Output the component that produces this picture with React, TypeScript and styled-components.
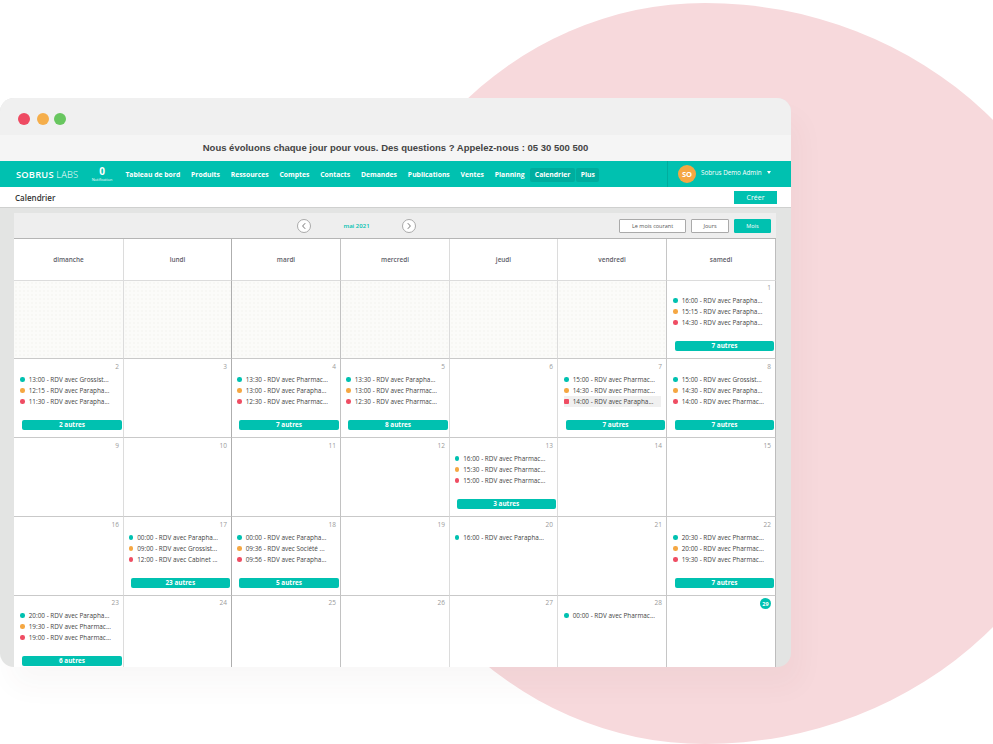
import React from "react";
import styled, { createGlobalStyle } from "styled-components";

const Global = createGlobalStyle`
  html, body { margin: 0; padding: 0; background: #fff; }
  body { font-family: "Open Sans", "Liberation Sans", sans-serif; }
`;

const TEAL = "#00c1b0";

const Stage = styled.div`
  position: relative;
  width: 993px;
  height: 744px;
  overflow: hidden;
  padding-top: 98px;
  box-sizing: border-box;
  background: #fff;
`;
const Blob = styled.div`
  position: absolute;
  left: 351px;
  top: 3px;
  width: 749px;
  height: 741px;
  background: #f7d9dc;
  border-radius: 354px 395px 395px 354px / 370.5px;
`;
const Win = styled.div`
  position: relative;
  width: 791px;
  height: 569px;
  border-radius: 14px;
  background: #e3e4e3;
  display: flex;
  flex-direction: column;
  box-shadow: 10px 20px 28px rgba(90, 50, 50, 0.035);
`;
const TitleBar = styled.div`
  height: 37px;
  flex: none;
  background: #f0f0f0;
  border-radius: 14px 14px 0 0;
  display: flex;
  align-items: center;
  padding: 5px 0 0 18px;
  box-sizing: border-box;
`;
const Light = styled.span<{ $c: string; $mr: number; $dotted?: boolean }>`
  width: 12px;
  height: 12px;
  border-radius: 50%;
  background-color: ${(p) => p.$c};
  margin-right: ${(p) => p.$mr}px;
  ${(p) =>
    p.$dotted
      ? "background-image: radial-gradient(#f5a03c 0.5px, transparent 0.6px); background-size: 2px 2px;"
      : ""}
`;
const Banner = styled.div`
  height: 26px;
  flex: none;
  background: #f5f5f5;
  display: flex;
  align-items: center;
  justify-content: center;
  font-family: "Liberation Sans", Arial, sans-serif;
  font-weight: 700;
  font-size: 9.5px;
  color: #444;
  padding-bottom: 1px;
  box-sizing: border-box;
`;
const Nav = styled.div`
  height: 26px;
  flex: none;
  background: ${TEAL};
  display: flex;
  align-items: center;
  color: #fff;
  padding-left: 16px;
`;
const Brand = styled.div`
  width: 70px;
  font-family: "Open Sans", sans-serif;
  font-size: 9.3px;
  letter-spacing: 0.2px;
  white-space: nowrap;
  & b { font-weight: 600; }
  & span { font-weight: 300; }
`;
const Notif = styled.div`
  width: 32px;
  display: flex;
  flex-direction: column;
  align-items: center;
  font-size: 10px;
  font-weight: 700;
  line-height: 11px;
  margin-top: -1px;
  & small { font-size: 3.8px; font-weight: 400; line-height: 5px; white-space: nowrap; }
`;
const NavItem = styled.div<{ $active?: boolean }>`
  font-size: 6.8px;
  font-weight: 700;
  padding: 0 ${(p) => (p.$active ? "4.4px" : "5px")};
  height: 14px;
  line-height: 14px;
  margin: 1px ${(p) => (p.$active ? "1px 0 0.5px" : "0.45px 0")};
  white-space: nowrap;
  border-radius: 2px;
  background: ${(p) => (p.$active ? "#00ad9e" : "transparent")};
`;
const NavItems = styled.div`
  display: flex;
  align-items: center;
  width: 550px;
  margin-left: -1px;
  box-sizing: border-box;
  padding-left: 3px;
`;
const UserBox = styled.div`
  flex: 1;
  align-self: stretch;
  border-left: 1px solid #00ad9e;
  display: flex;
  align-items: center;
  padding-left: 10px;
  font-size: 6.3px;
`;
const Avatar = styled.div`
  width: 18px;
  height: 18px;
  border-radius: 50%;
  background: #f5a742;
  color: #fff;
  font-weight: 700;
  font-size: 7.5px;
  display: flex;
  align-items: center;
  justify-content: center;
  margin-right: 5px;
`;
const UserName = styled.span`
  margin-top: -3px;
  white-space: nowrap;
`;
const Caret = styled.span`
  width: 0;
  height: 0;
  border: 2.5px solid transparent;
  border-top: 3px solid #fff;
  border-bottom: 0;
  margin: -3px 0 0 5px;
`;
const SubBar = styled.div`
  height: 21px;
  flex: none;
  box-sizing: border-box;
  background: #fff;
  border-bottom: 1px solid #cfd0cf;
  display: flex;
  align-items: center;
  justify-content: space-between;
  padding: 0 14px 0 15px;
  font-size: 8px;
  font-weight: 600;
  color: #333;
`;
const CreateBtn = styled.div`
  width: 43px;
  height: 13px;
  background: ${TEAL};
  color: #fff;
  font-size: 7px;
  font-weight: 400;
  display: flex;
  align-items: center;
  justify-content: center;
`;
const Panel = styled.div`
  margin: 5px 15px 0 14px;
  flex: 1;
  min-height: 0;
  display: flex;
  flex-direction: column;
  overflow: hidden;
`;
const Toolbar = styled.div`
  height: 25px;
  flex: none;
  background: #eee;
  position: relative;
  display: flex;
  align-items: center;
  padding-left: 283px;
`;
const Arrow = styled.div`
  width: 14px;
  height: 14px;
  box-sizing: border-box;
  border: 1px solid #aaa;
  border-radius: 50%;
  background: #fff;
  display: flex;
  align-items: center;
  justify-content: center;
  color: #777;
`;
const Month = styled.div`
  width: 91px;
  text-align: center;
  color: ${TEAL};
  font-size: 6px;
  font-weight: 600;
`;
const ViewGroup = styled.div`
  margin-left: auto;
  margin-right: 5px;
  display: flex;
  gap: 5px;
`;
const ViewBtn = styled.div<{ $w: number; $on?: boolean }>`
  width: ${(p) => p.$w}px;
  height: 14px;
  box-sizing: border-box;
  background: ${(p) => (p.$on ? TEAL : "#fff")};
  border: 1px solid ${(p) => (p.$on ? TEAL : "#aaa")};
  color: ${(p) => (p.$on ? "#fff" : "#555")};
  font-size: 5.5px;
  display: flex;
  align-items: center;
  justify-content: center;
  border-radius: 1px;
`;
const Grid = styled.div`
  display: grid;
  grid-template-columns: 110px 108px 109px 109px 108px 109px 109px;
  grid-template-rows: 42px 78px 79px 79px 79px 79px;
  border-top: 1px solid #b5b5b5;
  background: #fff;
  flex: 1;
  overflow: hidden;
`;
const lineColors = ["#dcdcdc", "#aeaeae", "#c2c2c2", "#dcdcdc", "#dcdcdc", "#c6c6c6", "#bdbdbd"];
const colPad = [6, 4.5, 5, 5, 4.5, 6, 6];
const HeadCell = styled.div<{ $i: number }>`
  box-sizing: border-box;
  border-right: 1px solid ${(p) => lineColors[p.$i]};
  border-bottom: 1px solid #dcdcdc;
  display: flex;
  align-items: center;
  justify-content: center;
  font-size: 6.4px;
  font-weight: 600;
  color: #5d5d68;
`;
const Cell = styled.div<{ $i: number; $muted?: boolean; $tight?: boolean }>`
  box-sizing: border-box;
  border-right: 1px solid ${(p) => lineColors[p.$i]};
  border-bottom: 1px solid #c9c9c9;
  position: relative;
  display: flex;
  flex-direction: column;
  padding: ${(p) => (p.$tight ? "2px" : "3px")} 1px 0 ${(p) => colPad[p.$i]}px;
  background-color: ${(p) => (p.$muted ? "#fbfbf9" : "#fff")};
  ${(p) =>
    p.$muted
      ? "background-image: radial-gradient(#f7f7f4 1px, transparent 1.1px); background-size: 4px 4px;"
      : ""}
`;
const DayNum = styled.div`
  height: 10px;
  line-height: 10px;
  text-align: right;
  padding-right: 3px;
  font-size: 6.5px;
  color: #9a9a9a;
`;
const TodayNum = styled.div`
  align-self: flex-end;
  width: 11px;
  height: 11px;
  margin: 0 3px -1px 0;
  border-radius: 50%;
  background: ${TEAL};
  color: #fff;
  font-size: 5.5px;
  font-weight: 700;
  display: flex;
  align-items: center;
  justify-content: center;
`;
const Events = styled.div`
  margin-top: 2px;
  height: 46px;
  flex: none;
`;
const EventRow = styled.div<{ $hl?: boolean }>`
  height: 11.1px;
  display: flex;
  align-items: center;
  font-size: 6.4px;
  color: #444;
  white-space: nowrap;
  background: ${(p) => (p.$hl ? "#f0f0f0" : "transparent")};
  margin-right: ${(p) => (p.$hl ? "4px" : "0")};
`;
const Dot = styled.span<{ $c: string; $sq?: boolean }>`
  width: 4.5px;
  height: 4.5px;
  flex: none;
  border-radius: ${(p) => (p.$sq ? "1px" : "50%")};
  background: ${(p) => p.$c};
  margin-right: 4.2px;
`;
const More = styled.div`
  margin: 0 0 0 2px;
  height: 9.5px;
  background: ${TEAL};
  border-radius: 2px;
  color: #fff;
  font-size: 6.4px;
  font-weight: 700;
  display: flex;
  align-items: center;
  justify-content: center;
  flex: none;
`;

const DOTS = [TEAL, "#f5a742", "#ef4d63"];
type Ev = { e?: string[]; more?: number; hl?: boolean };
const P = "Parapha...";
const H = "Pharmac...";
const G = "Grossist...";
const data: Record<number, Ev> = {
  1: { e: ["16:00|" + P, "15:15|" + P, "14:30|" + P], more: 7 },
  2: { e: ["13:00|" + G, "12:15|" + P, "11:30|" + P], more: 2 },
  4: { e: ["13:30|" + H, "13:00|" + P, "12:30|" + H], more: 7 },
  5: { e: ["13:30|" + P, "13:00|" + H, "12:30|" + H], more: 8 },
  7: { e: ["15:00|" + H, "14:30|" + H, "14:00|" + P], more: 7, hl: true },
  8: { e: ["15:00|" + G, "14:30|" + P, "14:00|" + H], more: 7 },
  13: { e: ["16:00|" + H, "15:30|" + H, "15:00|" + H], more: 3 },
  17: { e: ["00:00|" + P, "09:00|" + G, "12:00|Cabinet ..."], more: 23 },
  18: { e: ["00:00|" + P, "09:36|Société ...", "09:56|" + P], more: 5 },
  20: { e: ["16:00|" + P] },
  22: { e: ["20:30|" + H, "20:00|" + H, "19:30|" + H], more: 7 },
  23: { e: ["20:00|" + P, "19:30|" + H, "19:00|" + H], more: 6 },
  28: { e: ["00:00|" + H] },
};
const days = ["dimanche", "lundi", "mardi", "mercredi", "jeudi", "vendredi", "samedi"];
const navs = ["Tableau de bord", "Produits", "Ressources", "Comptes", "Contacts", "Demandes", "Publications", "Ventes", "Planning"];

const Chevron = ({ dir }: { dir: "l" | "r" }) => (
  <svg width="8" height="8" viewBox="0 0 8 8" fill="none" stroke="currentColor" strokeWidth="1">
    <path d={dir === "l" ? "M5.2 1.2 2.6 4l2.6 2.8" : "M2.8 1.2 5.4 4 2.8 6.8"} />
  </svg>
);

export default function App() {
  const cells: (number | null)[] = [null, null, null, null, null, null];
  for (let d = 1; d <= 29; d++) cells.push(d);
  return (
    <Stage>
      <Global />
      <Blob />
      <Win>
        <TitleBar>
          <Light $c="#ee4a62" $mr={7} $dotted />
          <Light $c="#f5ae4b" $mr={5} />
          <Light $c="#68c65f" $mr={0} />
        </TitleBar>
        <Banner>Nous évoluons chaque jour pour vous. Des questions ? Appelez-nous : 05 30 500 500</Banner>
        <Nav>
          <Brand>
            <b>SOBRUS</b> <span>LABS</span>
          </Brand>
          <Notif>
            0<small>Notification</small>
          </Notif>
          <NavItems>
            {navs.map((n) => (
              <NavItem key={n}>{n}</NavItem>
            ))}
            <NavItem $active>Calendrier</NavItem>
            <NavItem $active>Plus</NavItem>
          </NavItems>
          <UserBox>
            <Avatar>SO</Avatar>
            <UserName>Sobrus Demo Admin</UserName>
            <Caret />
          </UserBox>
        </Nav>
        <SubBar>
          Calendrier
          <CreateBtn>Créer</CreateBtn>
        </SubBar>
        <Panel>
          <Toolbar>
            <Arrow>
              <Chevron dir="l" />
            </Arrow>
            <Month>mai 2021</Month>
            <Arrow>
              <Chevron dir="r" />
            </Arrow>
            <ViewGroup>
              <ViewBtn $w={67}>Le mois courant</ViewBtn>
              <ViewBtn $w={38}>Jours</ViewBtn>
              <ViewBtn $w={37} $on>
                Mois
              </ViewBtn>
            </ViewGroup>
          </Toolbar>
          <Grid>
            {days.map((d, i) => (
              <HeadCell key={d} $i={i}>
                {d}
              </HeadCell>
            ))}
            {cells.map((d, idx) => {
              const i = idx % 7;
              const tight = idx < 7 || idx >= 28;
              if (d === null) return <Cell key={idx} $i={i} $muted />;
              const ev = data[d];
              return (
                <Cell key={idx} $i={i} $tight={tight}>
                  {d === 29 ? <TodayNum>{d}</TodayNum> : <DayNum>{d}</DayNum>}
                  {ev?.e && (
                    <Events>
                      {ev.e.map((t, k) => {
                        const [time, who] = t.split("|");
                        const hl = ev.hl && k === 2;
                        return (
                          <EventRow key={k} $hl={hl}>
                            <Dot $c={DOTS[k]} $sq={hl} />
                            {time} - RDV avec {who}
                          </EventRow>
                        );
                      })}
                    </Events>
                  )}
                  {ev?.more !== undefined && <More>{ev.more} autres</More>}
                </Cell>
              );
            })}
          </Grid>
        </Panel>
      </Win>
    </Stage>
  );
}
